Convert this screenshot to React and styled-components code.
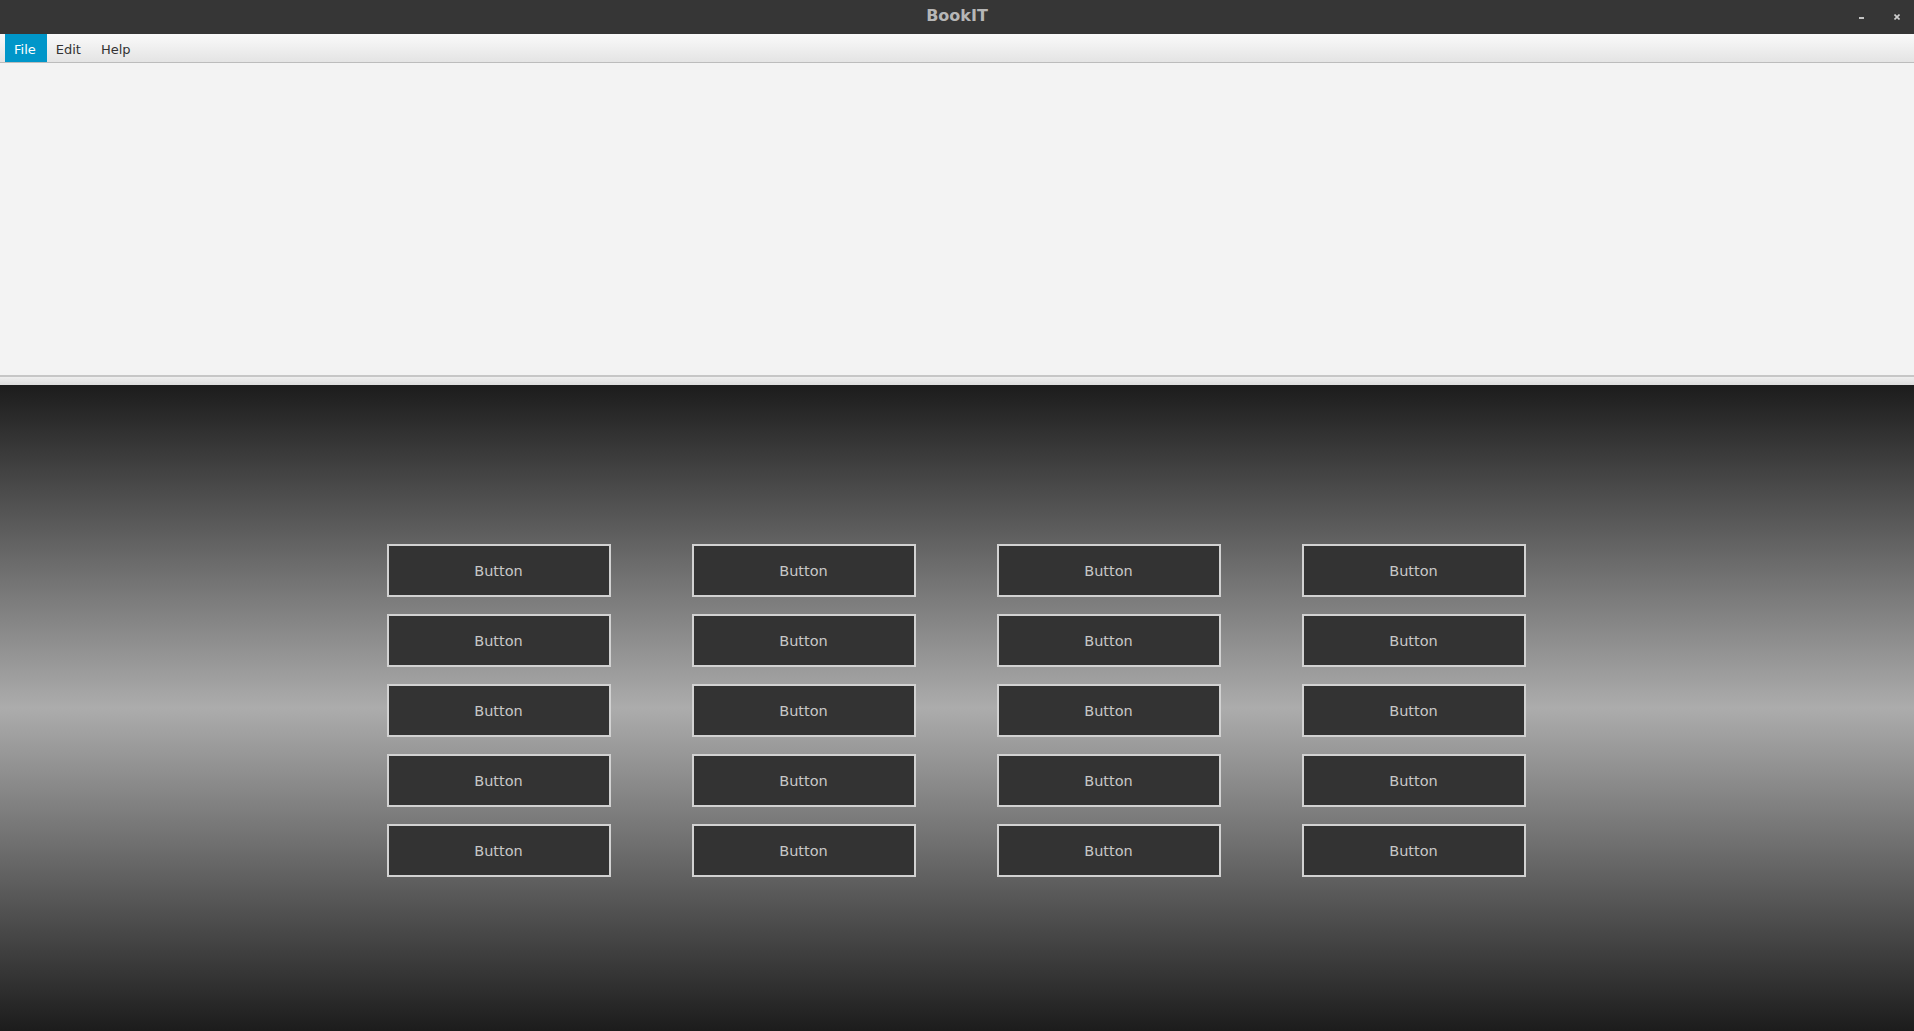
import React from 'react';
import styled, { createGlobalStyle } from 'styled-components';

const GlobalStyle = createGlobalStyle`
  *, *::before, *::after {
    box-sizing: border-box;
  }
  html, body {
    margin: 0;
    padding: 0;
    height: 100%;
    overflow: hidden;
  }
  #root {
    height: 100%;
  }
  body {
    font-family: 'DejaVu Sans', 'Liberation Sans', sans-serif;
  }
`;

const Window = styled.div`
  display: flex;
  flex-direction: column;
  height: 100vh;
  background: #f3f3f3;
`;

const TitleBar = styled.div`
  position: relative;
  flex: 0 0 34px;
  display: flex;
  align-items: center;
  justify-content: center;
  padding-bottom: 4px;
  background: #363636;
`;

const Title = styled.span`
  color: #b6b6b6;
  font-size: 16px;
  font-weight: bold;
`;

const WindowControls = styled.div`
  position: absolute;
  right: 14px;
  top: 0;
  height: 100%;
  display: flex;
  align-items: center;
  gap: 30px;
`;

const MenuBar = styled.div`
  flex: 0 0 29px;
  display: flex;
  padding-left: 5px;
  background: linear-gradient(#fafafa, #e4e4e4);
  border-bottom: 1px solid #bcbcbc;
`;

const MenuItem = styled.div`
  display: flex;
  align-items: center;
  padding: 2px 11px 0 9px;
  font-size: 13px;
  color: ${(p) => (p.active ? '#ffffff' : '#333333')};
  background: ${(p) => (p.active ? '#0096c9' : 'transparent')};
`;

const TopPane = styled.div`
  flex: 0 0 312px;
  background: #f3f3f3;
`;

const Divider = styled.div`
  flex: 0 0 10px;
  border-top: 2px solid #c6c6c6;
  background: linear-gradient(#eeeeee, #dcdcdc);
`;

const BottomPane = styled.div`
  flex: 1;
  display: flex;
  align-items: center;
  justify-content: center;
  padding-top: 5px;
  padding-right: 2px;
  background: linear-gradient(#1c1c1c 0%, #acacac 50%, #1c1c1c 100%);
`;

const ButtonGrid = styled.div`
  display: grid;
  grid-template-columns: repeat(4, 224px);
  grid-auto-rows: 53px;
  column-gap: 81px;
  row-gap: 17px;
`;

const GridButton = styled.button`
  margin: 0;
  padding: 0;
  border: 2px solid #d2d2d2;
  background: #333333;
  color: #c8c8c8;
  font-family: 'DejaVu Sans', sans-serif;
  font-size: 14.5px;
  cursor: pointer;
`;

function MinimizeIcon() {
  return (
    <svg width="5" height="3" viewBox="0 0 5 3">
      <rect x="0" y="1" width="5" height="2" fill="#c4c4c4" />
    </svg>
  );
}

function CloseIcon() {
  return (
    <svg width="6" height="6" viewBox="0 0 6 6">
      <path d="M0.5 0.5 L5.5 5.5 M5.5 0.5 L0.5 5.5" stroke="#d0d0d0" strokeWidth="1.6" />
    </svg>
  );
}

export default function App() {
  const buttons = Array.from({ length: 20 }, (_, i) => i);

  return (
    <>
      <GlobalStyle />
      <Window>
        <TitleBar>
          <Title>BookIT</Title>
          <WindowControls>
            <MinimizeIcon />
            <CloseIcon />
          </WindowControls>
        </TitleBar>
        <MenuBar>
          <MenuItem active>File</MenuItem>
          <MenuItem>Edit</MenuItem>
          <MenuItem>Help</MenuItem>
        </MenuBar>
        <TopPane />
        <Divider />
        <BottomPane>
          <ButtonGrid>
            {buttons.map((i) => (
              <GridButton key={i}>Button</GridButton>
            ))}
          </ButtonGrid>
        </BottomPane>
      </Window>
    </>
  );
}
